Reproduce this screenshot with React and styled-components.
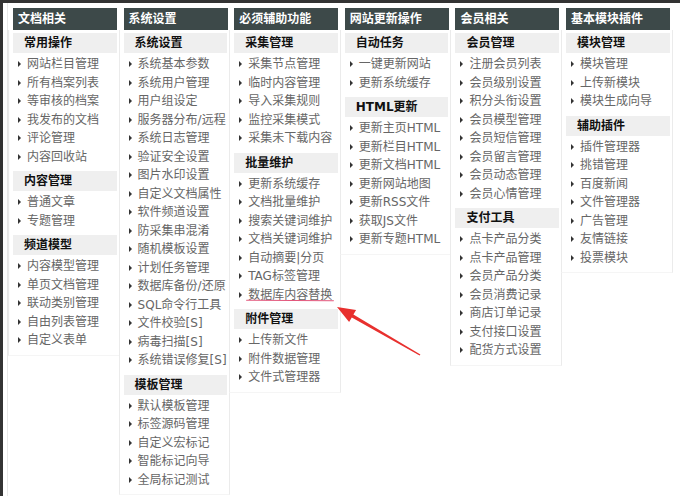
import React from 'react';
import styled, { createGlobalStyle } from 'styled-components';

const GlobalStyle = createGlobalStyle`
  html, body { margin: 0; padding: 0; background: #fff; }
  body { font-family: "DejaVu Sans", "Noto Sans CJK SC", sans-serif; }
`;

const Frame = styled.div`
  position: relative;
  width: 680px;
  height: 496px;
  box-sizing: border-box;
  border-top: 3px solid #333;
  border-left: 3px solid #333;
  padding-left: 4px;
  overflow: hidden;
  background: #fff;
`;

const Board = styled.div`
  display: flex;
  align-items: flex-start;
  height: 100%;
  box-sizing: border-box;
  padding-top: 5px;
  border-left: 1px solid #e8e8e8;
`;

const Column = styled.div`
  flex: none;
  width: 111.6px;
  margin-right: -1px;
  display: flex;
  flex-direction: column;
`;

const Header = styled.div`
  margin: 0 2.6px 0 5px;
  height: 22px;
  line-height: 22px;
  padding-left: 5px;
  background: #3d4949;
  color: #fff;
  font-size: 12px;
  font-weight: bold;
  white-space: nowrap;
`;

const Body = styled.div`
  border-left: 1px solid #ebebeb;
  border-right: 1px solid #ebebeb;
  border-bottom: 1px solid #f5f5f5;
  padding: 3px 2px 0 4px;
`;

const SubHeader = styled.div`
  height: 20px;
  line-height: 20px;
  padding-left: 11px;
  background: #efefef;
  color: #111;
  font-size: 12px;
  font-weight: bold;
  white-space: nowrap;
`;

const List = styled.ul`
  margin: 0;
  padding: 2px 0 5px;
  list-style: none;
`;

const Item = styled.li`
  position: relative;
  height: 18.5px;
  line-height: 18.5px;
  padding-left: 14px;
  font-size: 12px;
  color: #666;
  white-space: nowrap;

  &::before {
    content: '';
    position: absolute;
    left: 5px;
    top: 50%;
    margin-top: -3px;
    border-left: 3px solid #333;
    border-top: 3px solid transparent;
    border-bottom: 3px solid transparent;
  }
`;

const Label = styled.span`
  position: relative;

  ${(p) =>
    p.$marked &&
    `
    &::after {
      content: '';
      position: absolute;
      left: -2px;
      right: -2px;
      bottom: 0px;
      height: 1.3px;
      border-radius: 1px;
      background: #e2577c;
      transform: rotate(0.4deg);
    }
  `}
`;

const Overlay = styled.svg`
  position: absolute;
  left: -3px;
  top: -3px;
  width: 680px;
  height: 496px;
  pointer-events: none;
`;

const columns = [
  {
    title: '文档相关',
    groups: [
      { name: '常用操作', items: ['网站栏目管理', '所有档案列表', '等审核的档案', '我发布的文档', '评论管理', '内容回收站'] },
      { name: '内容管理', items: ['普通文章', '专题管理'] },
      { name: '频道模型', items: ['内容模型管理', '单页文档管理', '联动类别管理', '自由列表管理', '自定义表单'] },
    ],
  },
  {
    title: '系统设置',
    groups: [
      {
        name: '系统设置',
        items: [
          '系统基本参数', '系统用户管理', '用户组设定', '服务器分布/远程', '系统日志管理', '验证安全设置',
          '图片水印设置', '自定义文档属性', '软件频道设置', '防采集串混淆', '随机模板设置', '计划任务管理',
          '数据库备份/还原', 'SQL命令行工具', '文件校验[S]', '病毒扫描[S]', '系统错误修复[S]',
        ],
      },
      { name: '模板管理', items: ['默认模板管理', '标签源码管理', '自定义宏标记', '智能标记向导', '全局标记测试'] },
    ],
  },
  {
    title: '必须辅助功能',
    groups: [
      { name: '采集管理', items: ['采集节点管理', '临时内容管理', '导入采集规则', '监控采集模式', '采集未下载内容'] },
      {
        name: '批量维护',
        items: ['更新系统缓存', '文档批量维护', '搜索关键词维护', '文档关键词维护', '自动摘要|分页', 'TAG标签管理', '数据库内容替换'],
      },
      { name: '附件管理', items: ['上传新文件', '附件数据管理', '文件式管理器'] },
    ],
  },
  {
    title: '网站更新操作',
    groups: [
      { name: '自动任务', items: ['一键更新网站', '更新系统缓存'] },
      {
        name: 'HTML更新',
        items: ['更新主页HTML', '更新栏目HTML', '更新文档HTML', '更新网站地图', '更新RSS文件', '获取JS文件', '更新专题HTML'],
      },
    ],
  },
  {
    title: '会员相关',
    groups: [
      {
        name: '会员管理',
        items: ['注册会员列表', '会员级别设置', '积分头衔设置', '会员模型管理', '会员短信管理', '会员留言管理', '会员动态管理', '会员心情管理'],
      },
      {
        name: '支付工具',
        items: ['点卡产品分类', '点卡产品管理', '会员产品分类', '会员消费记录', '商店订单记录', '支付接口设置', '配货方式设置'],
      },
    ],
  },
  {
    title: '基本模块插件',
    groups: [
      { name: '模块管理', items: ['模块管理', '上传新模块', '模块生成向导'] },
      { name: '辅助插件', items: ['插件管理器', '挑错管理', '百度新闻', '文件管理器', '广告管理', '友情链接', '投票模块'] },
    ],
  },
];

const MARKED = '数据库内容替换';

function Arrow() {
  return (
    <Overlay viewBox="0 0 680 496">
      <polygon
        points="337,307 356.1,309.9 353.4,314.6 420.4,354.4 419.6,355.6 351.8,317.4 349.1,322.1"
        fill="#e8302e"
      />
    </Overlay>
  );
}

export default function App() {
  return (
    <Frame>
      <GlobalStyle />
      <Board>
        {columns.map((col) => (
          <Column key={col.title}>
            <Header>{col.title}</Header>
            <Body>
              {col.groups.map((g) => (
                <React.Fragment key={g.name}>
                  <SubHeader>{g.name}</SubHeader>
                  <List>
                    {g.items.map((it) => (
                      <Item key={it}>
                        <Label $marked={it === MARKED}>{it}</Label>
                      </Item>
                    ))}
                  </List>
                </React.Fragment>
              ))}
            </Body>
          </Column>
        ))}
      </Board>
      <Arrow />
    </Frame>
  );
}
